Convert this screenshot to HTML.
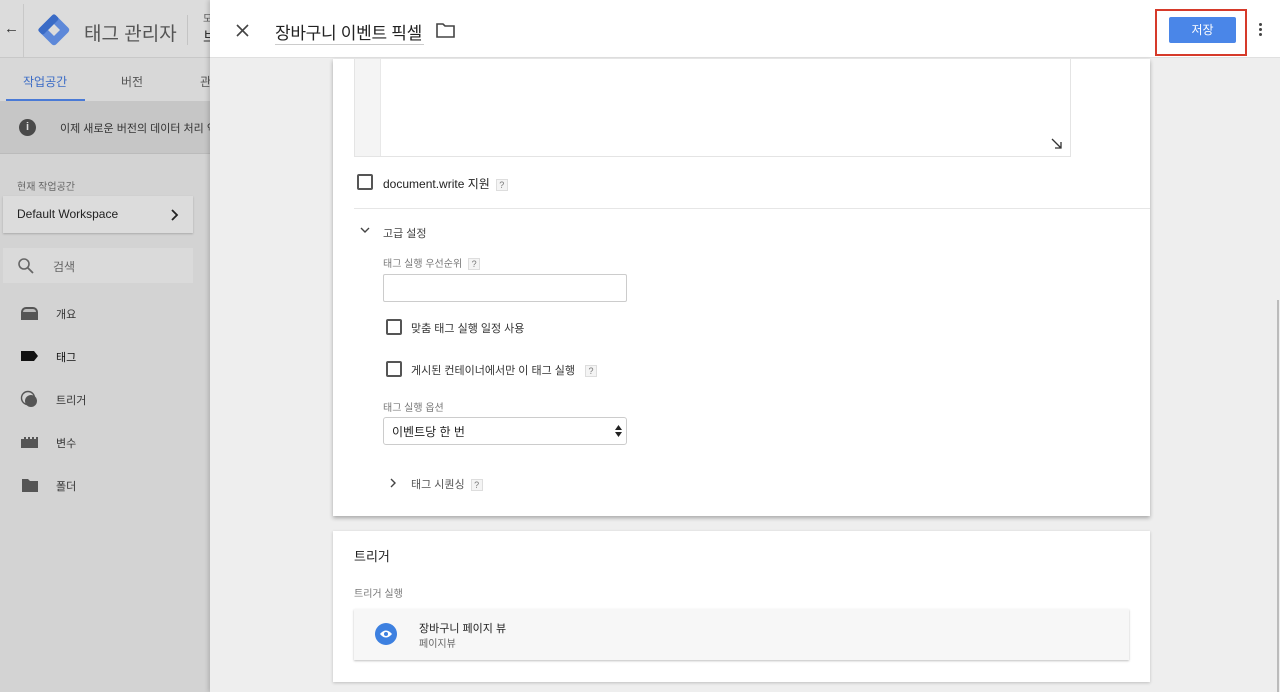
<!DOCTYPE html>
<html><head><meta charset="utf-8">
<style>
*{box-sizing:border-box;margin:0;padding:0}
body{width:1280px;height:692px;overflow:hidden;position:relative;background:#d3d3d3;font-family:"Liberation Sans","Noto Sans CJK KR",sans-serif;color:#222}
.abs{position:absolute}
.t{position:absolute;white-space:nowrap}
.help{display:inline-block;width:12px;height:12px;border:1px solid #ddd;background:#f4f4f4;font-size:9px;color:#777;text-align:center;line-height:10px;vertical-align:middle;margin-left:6px}
.cb{position:absolute;width:16px;height:16px;border:2px solid #555;border-radius:2px}
</style></head><body>
<div class="abs" style="left:0;top:0;width:210px;height:58px;background:#dcdcdc;border-bottom:1px solid #c8c8c8"></div>
<div class="abs" style="left:23px;top:4px;width:1px;height:54px;background:#c8c8c8"></div>
<div class="t" style="left:4px;top:20px;font-size:15px;color:#333">←</div>
<svg class="abs" style="left:37px;top:13px" width="34" height="34" viewBox="0 0 32 32"><g transform="rotate(45 16 16)"><rect x="5" y="5" width="22" height="22" rx="3" fill="#5d88d9"/><rect x="12" y="12" width="8" height="8" fill="#dcdcdc"/><rect x="5" y="5" width="7" height="22" rx="2" fill="#3a6bc6"/></g></svg>
<div class="t" style="left:84px;top:19px;font-size:19px;color:#555">태그 관리자</div>
<div class="abs" style="left:187px;top:15px;width:1px;height:30px;background:#c4c4c4"></div>
<div class="t" style="left:203px;top:10px;font-size:10px;color:#555">모</div>
<div class="t" style="left:203px;top:26px;font-size:15px;color:#333">브</div>
<div class="abs" style="left:0;top:58px;width:210px;height:43px;background:#d8d8d8"></div>
<div class="t" style="left:23px;top:73px;font-size:12px;color:#3a6bc6">작업공간</div>
<div class="abs" style="left:6px;top:99px;width:79px;height:3px;background:#4a7ad6"></div>
<div class="t" style="left:121px;top:73px;font-size:12px;color:#555">버전</div>
<div class="t" style="left:200px;top:73px;font-size:12px;color:#555">관</div>
<div class="abs" style="left:0;top:101px;width:210px;height:53px;background:#c6c6c6;border-bottom:1px solid #bbb"></div>
<div class="abs" style="left:19px;top:119px;width:17px;height:17px;border-radius:50%;background:#4a4a4a;color:#ddd;font-size:11px;text-align:center;line-height:17px;font-weight:bold">i</div>
<div class="t" style="left:60px;top:120px;font-size:11px;color:#333">이제 새로운 버전의 데이터 처리 약</div>
<div class="t" style="left:17px;top:178px;font-size:10px;color:#666">현재 작업공간</div>
<div class="abs" style="left:3px;top:196px;width:190px;height:37px;background:#dcdcdc;box-shadow:0 1px 2px rgba(0,0,0,.2)"></div>
<div class="t" style="left:17px;top:207px;font-size:12px;color:#222">Default Workspace</div>
<svg class="abs" style="left:171px;top:209px" width="8" height="12"><path d="M1 1L6 6L1 11" fill="none" stroke="#222" stroke-width="1.8"/></svg>
<div class="abs" style="left:3px;top:248px;width:190px;height:35px;background:#dadada"></div>
<svg class="abs" style="left:17px;top:257px" width="18" height="18" viewBox="0 0 18 18"><circle cx="7" cy="7" r="5" fill="none" stroke="#666" stroke-width="1.6"/><path d="M11 11l5 5" stroke="#666" stroke-width="1.8"/></svg>
<div class="t" style="left:53px;top:258px;font-size:12px;color:#666">검색</div>
<div class="abs" style="left:21px;top:307px;width:17px;height:13px;background:#555;border-radius:5px 5px 0 0"></div>
<div class="abs" style="left:23px;top:309px;width:13px;height:3px;background:#bbb;border-radius:3px 3px 0 0"></div>
<div class="t" style="left:56px;top:306px;font-size:11px;color:#333">개요</div>
<svg class="abs" style="left:21px;top:351px" width="18" height="10"><path d="M0 0H13L17 5L13 10H0Z" fill="#111"/></svg>
<div class="t" style="left:56px;top:349px;font-size:11px;color:#111">태그</div>
<svg class="abs" style="left:20px;top:390px" width="19" height="19"><circle cx="8" cy="8" r="6.5" fill="none" stroke="#555" stroke-width="1.4"/><circle cx="11" cy="11" r="6" fill="#555"/></svg>
<div class="t" style="left:56px;top:392px;font-size:11px;color:#333">트리거</div>
<svg class="abs" style="left:21px;top:437px" width="18" height="11"><path d="M0 2H3V0H5V2H7V0H9V2H11V0H13V2H15V0H17V11H0Z" fill="#555"/></svg>
<div class="t" style="left:56px;top:435px;font-size:11px;color:#333">변수</div>
<svg class="abs" style="left:22px;top:479px" width="17" height="13"><path d="M0 0H6L8 2H16V13H0Z" fill="#555"/></svg>
<div class="t" style="left:56px;top:478px;font-size:11px;color:#333">폴더</div>

<div class="abs" style="left:210px;top:0;width:1070px;height:692px;background:#eeeeee;box-shadow:-2px 0 4px rgba(0,0,0,.15)"></div>
<div class="abs" style="left:210px;top:0;width:1070px;height:58px;background:#fff;border-bottom:1px solid #e0e0e0"></div>
<svg class="abs" style="left:236px;top:24px" width="13" height="13"><path d="M1 1L12 12M12 1L1 12" stroke="#444" stroke-width="1.6"/></svg>
<div class="t" style="left:275px;top:19px;font-size:17px;color:#222;letter-spacing:-0.3px">장바구니 이벤트 픽셀</div>
<div class="abs" style="left:275px;top:44px;width:149px;height:1px;background:#ccc"></div>
<svg class="abs" style="left:436px;top:22px" width="19" height="16"><path d="M1 2H7L9 4H18V15H1Z" fill="none" stroke="#444" stroke-width="1.6"/></svg>
<div class="abs" style="left:1155px;top:9px;width:92px;height:47px;border:2px solid #d63a2a"></div>
<div class="abs" style="left:1169px;top:17px;width:67px;height:26px;background:#4a86e8;border-radius:2px;color:#fff;font-size:12px;text-align:center;line-height:26px">저장</div>
<div class="abs" style="left:1259px;top:23px;width:3px;height:3px;background:#444;border-radius:50%"></div>
<div class="abs" style="left:1259px;top:28px;width:3px;height:3px;background:#444;border-radius:50%"></div>
<div class="abs" style="left:1259px;top:33px;width:3px;height:3px;background:#444;border-radius:50%"></div>
<div class="abs" style="left:1277px;top:300px;width:2px;height:392px;background:#bbb"></div>

<div class="abs" style="left:333px;top:59px;width:817px;height:457px;background:#fff;box-shadow:0 2px 4px rgba(0,0,0,.3)"></div>
<div class="abs" style="left:354px;top:59px;width:717px;height:98px;border:1px solid #e4e4e4;border-top:none;background:#fff"></div>
<div class="abs" style="left:355px;top:59px;width:26px;height:97px;background:#f4f4f4;border-right:1px solid #e8e8e8"></div>
<svg class="abs" style="left:1051px;top:138px" width="12" height="12"><path d="M1 1L10 10M4 10H10V4" fill="none" stroke="#333" stroke-width="1.3"/></svg>
<div class="cb" style="left:357px;top:174px"></div>
<div class="t" style="left:383px;top:175px;font-size:12px;color:#222">document.write 지원<span class="help">?</span></div>
<div class="abs" style="left:354px;top:208px;width:796px;height:1px;background:#e6e6e6"></div>
<svg class="abs" style="left:360px;top:227px" width="10" height="8"><path d="M1 1L5 5L9 1" fill="none" stroke="#444" stroke-width="1.4"/></svg>
<div class="t" style="left:383px;top:225px;font-size:11px;color:#444">고급 설정</div>
<div class="t" style="left:383px;top:255px;font-size:10px;color:#777">태그 실행 우선순위<span class="help">?</span></div>
<div class="abs" style="left:383px;top:274px;width:244px;height:28px;border:1px solid #ccc;border-radius:2px"></div>
<div class="cb" style="left:386px;top:319px"></div>
<div class="t" style="left:411px;top:320px;font-size:11px;color:#333">맞춤 태그 실행 일정 사용</div>
<div class="cb" style="left:386px;top:361px"></div>
<div class="t" style="left:411px;top:362px;font-size:11px;color:#333">게시된 컨테이너에서만 이 태그 실행<span class="help" style="margin-left:10px">?</span></div>
<div class="t" style="left:383px;top:399px;font-size:10px;color:#777">태그 실행 옵션</div>
<div class="abs" style="left:383px;top:417px;width:244px;height:28px;border:1px solid #ccc;border-radius:3px"></div>
<div class="t" style="left:392px;top:423px;font-size:12px;color:#222">이벤트당 한 번</div>
<svg class="abs" style="left:615px;top:425px" width="7" height="12"><path d="M0 5L3.5 0L7 5ZM0 7L3.5 12L7 7Z" fill="#222"/></svg>
<svg class="abs" style="left:390px;top:478px" width="7" height="10"><path d="M1 1L5 5L1 9" fill="none" stroke="#444" stroke-width="1.4"/></svg>
<div class="t" style="left:411px;top:476px;font-size:11px;color:#555">태그 시퀀싱<span class="help">?</span></div>

<div class="abs" style="left:333px;top:531px;width:817px;height:151px;background:#fff;box-shadow:0 1px 3px rgba(0,0,0,.2)"></div>
<div class="t" style="left:354px;top:546px;font-size:13px;color:#222">트리거</div>
<div class="t" style="left:354px;top:585px;font-size:10px;color:#777">트리거 실행</div>
<div class="abs" style="left:354px;top:609px;width:775px;height:51px;background:#f7f7f7;box-shadow:0 1px 2px rgba(0,0,0,.25)"></div>
<div class="abs" style="left:375px;top:623px;width:22px;height:22px;border-radius:50%;background:#3d80e0"></div>
<svg class="abs" style="left:379px;top:629px" width="14" height="10"><path d="M1 5Q7 -2 13 5Q7 12 1 5Z" fill="#fff"/><circle cx="7" cy="5" r="2" fill="#3d80e0"/></svg>
<div class="t" style="left:419px;top:620px;font-size:11px;color:#222">장바구니 페이지 뷰</div>
<div class="t" style="left:419px;top:635px;font-size:10px;color:#666">페이지뷰</div>
</body></html>
